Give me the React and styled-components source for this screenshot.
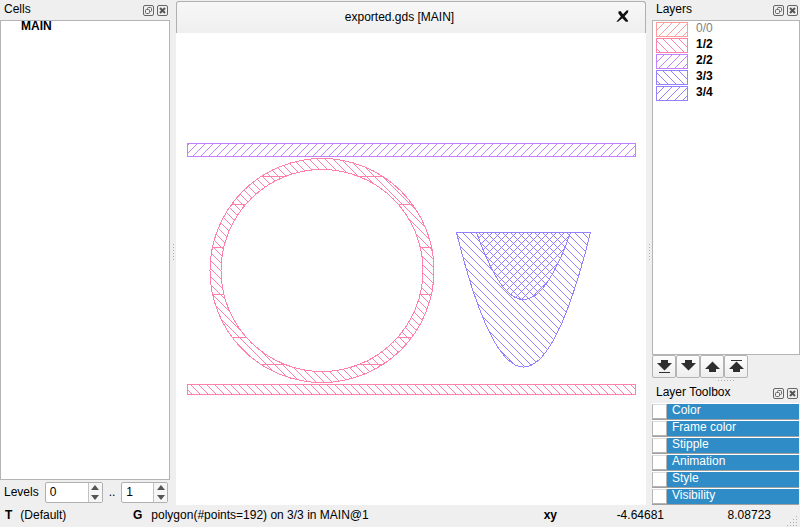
import { useState } from 'react';
import styled, { createGlobalStyle } from 'styled-components';

const PINK = '#ff80a8';
const PURPLE = '#c080ff';
const BLUE = '#9580ff';

const layers = [
  { name: '0/0', color: '#ff9d9d', hatch: 'up', empty: true },
  { name: '1/2', color: PINK, hatch: 'down' },
  { name: '2/2', color: PURPLE, hatch: 'up' },
  { name: '3/3', color: BLUE, hatch: 'down' },
  { name: '3/4', color: BLUE, hatch: 'up' },
];

const tools = ['Color', 'Frame color', 'Stipple', 'Animation', 'Style', 'Visibility'];

// one pixel per row, repeated every 8px
const steps = [0, 1, 2, 3, 4, 5, 6, 7];
const hatchPaths = {
  down: steps.map((i) => `M${i} ${i}h1v1h-1z`).join(''),
  up: steps.map((i) => `M${7 - i} ${i}h1v1h-1z`).join(''),
};

const Hatch = ({ id, color, direction, x = 0 }) => (
  <pattern id={id} x={x} y="0" width="8" height="8" patternUnits="userSpaceOnUse">
    <path d={hatchPaths[direction]} fill={color} shapeRendering="crispEdges" />
  </pattern>
);

const Swatch = ({ layer }) => {
  const id = `swatch-${layer.name.replace('/', '-')}`;
  return (
    <SwatchSvg viewBox="0 0 32 15" shapeRendering="crispEdges" aria-hidden="true">
      <defs>
        <Hatch id={id} color={layer.color} direction={layer.hatch} x={layer.hatch === 'up' ? 1 : 6} />
      </defs>
      <rect x="0.5" y="0.5" width="31" height="14" fill={`url(#${id})`} stroke={layer.color} />
    </SwatchSvg>
  );
};

const CX = 322;
const CY = 270.5;
const OUTER = 112;
const INNER = 101;
const cuts = [176.5, 204.5, 247.5, 294.5, 337.5, 364.5];

const circle = (r) => `M${CX - r} ${CY}a${r} ${r} 0 1 0 ${2 * r} 0a${r} ${r} 0 1 0 ${-2 * r} 0z`;

const cutPath = cuts
  .map((y) => {
    const dy = y - CY;
    const o = Math.sqrt(OUTER * OUTER - dy * dy);
    const i = Math.sqrt(INNER * INNER - dy * dy);
    return `M${CX - o} ${y}H${CX - i}M${CX + i} ${y}H${CX + o}`;
  })
  .join('');

const Drawing = () => (
  <DrawingSvg viewBox="176 33 470 472" shapeRendering="crispEdges" role="img" aria-label="Layout of MAIN">
    <defs>
      <Hatch id="h12" color={PINK} direction="down" x={6} />
      <Hatch id="h22" color={PURPLE} direction="up" x={5} />
      <Hatch id="h33" color={BLUE} direction="down" x={6} />
      <Hatch id="h34" color={BLUE} direction="up" x={5} />
    </defs>
    <rect x="187.5" y="143.5" width="448" height="13" fill="url(#h22)" stroke={PURPLE} />
    <rect x="187.5" y="384.5" width="448" height="10" fill="url(#h12)" stroke={PINK} />
    <path d={circle(OUTER) + circle(INNER)} fill="url(#h12)" fillRule="evenodd" stroke={PINK} />
    <path d={cutPath} stroke={PINK} />
    <path d="M456.5 232.5Q523.5 501.5 590.5 232.5z" fill="url(#h33)" stroke={BLUE} />
    <path d="M476.5 232.5Q523.5 366.5 570.5 232.5z" fill="url(#h34)" stroke={BLUE} />
  </DrawingSvg>
);

const PanelHeader = ({ title }) => (
  <Header>
    <Title>{title}</Title>
    <IconButton aria-label={`Float ${title}`}>
      <svg width="11" height="11" viewBox="0 0 11 11" fill="none" stroke="#666">
        <rect x="0.5" y="0.5" width="10" height="10" rx="1.5" />
        <rect x="4.5" y="2.5" width="4" height="4" rx="1" />
        <rect x="2.5" y="4.5" width="4" height="4" rx="1" fill="#efefef" />
      </svg>
    </IconButton>
    <IconButton aria-label={`Close ${title}`}>
      <svg width="11" height="11" viewBox="0 0 11 11" fill="none" stroke="#666">
        <rect x="0.5" y="0.5" width="10" height="10" rx="1.5" />
        <path d="M3 3l5 5M8 3l-5 5" stroke="#555" strokeWidth="2" />
      </svg>
    </IconButton>
  </Header>
);

const Spin = ({ label, initial, width }) => {
  const [value, setValue] = useState(initial);
  return (
    <SpinBox $width={width}>
      <SpinInput aria-label={label} value={value} onChange={(e) => setValue(Number(e.target.value) || 0)} />
      <SpinArrows>
        <ArrowButton aria-label={`${label} up`} onClick={() => setValue(value + 1)}>
          <svg width="8" height="5" viewBox="0 0 8 5"><path d="M0 5L4 0 8 5z" fill="#555" /></svg>
        </ArrowButton>
        <ArrowButton aria-label={`${label} down`} onClick={() => setValue(Math.max(0, value - 1))}>
          <svg width="8" height="5" viewBox="0 0 8 5"><path d="M0 0h8L4 5z" fill="#555" /></svg>
        </ArrowButton>
      </SpinArrows>
    </SpinBox>
  );
};

const moves = [
  { label: 'Move to bottom', d: 'M4 0h7v3h4L7.5 10.500 0 3h4zM2 12h11v1H2z' },
  { label: 'Move down', d: 'M4 0h7v3h4L7.5 10.500 0 3h4z' },
  { label: 'Move up', d: 'M4 12h7V9h4L7.5 1.500 0 9h4z' },
  { label: 'Move to top', d: 'M4 12h7V9h4L7.5 1.500 0 9h4zM2 0h11v1H2z' },
];

const App = () => {
  return (
    <Window>
      <GlobalStyle />
      <Body>
        <Dock $width={170}>
          <PanelHeader title="Cells" />
          <ListBox>
            <CellItem>MAIN</CellItem>
          </ListBox>
          <Levels>
            <LevelsText>Levels</LevelsText>
            <Spin label="From level" initial={0} width={58} />
            <LevelsText>..</LevelsText>
            <Spin label="To level" initial={1} width={47} />
          </Levels>
        </Dock>
        <Splitter><Grip /></Splitter>
        <Main>
          <Tab>
            <TabTitle>exported.gds [MAIN]</TabTitle>
            <IconButton aria-label="Close tab">
              <svg width="13" height="13" viewBox="0 0 13 13" fill="#111">
                <path d="M2.500 1.500L4.500 1 7 4.200 10.500 0.500 12.300 0.300 12 2.500 8.600 6.300 12 10.500 11.600 12 9.500 11.600 6.300 8.300 2 11.800 0.400 11.800 4.800 6.600 2.300 3.200z" />
              </svg>
            </IconButton>
          </Tab>
          <Drawing />
        </Main>
        <Splitter><Grip /></Splitter>
        <Dock $width={148}>
          <PanelHeader title="Layers" />
          <ListBox>
            {layers.map((layer) => (
              <LayerItem key={layer.name} $empty={layer.empty}>
                <Swatch layer={layer} />
                {layer.name}
              </LayerItem>
            ))}
          </ListBox>
          <Moves>
            {moves.map((move) => (
              <MoveButton key={move.label} aria-label={move.label}>
                <svg width="15" height="13" viewBox="0 0 15 13"><path d={move.d} fill="#2e2e2e" /></svg>
              </MoveButton>
            ))}
          </Moves>
          <HandleRow><Grip $row /></HandleRow>
          <PanelHeader title="Layer Toolbox" />
          <Toolbox>
            {tools.map((tool) => (
              <ToolRow key={tool}>
                <ToolCheck type="checkbox" />
                <ToolName>{tool}</ToolName>
              </ToolRow>
            ))}
          </Toolbox>
        </Dock>
      </Body>
      <StatusBar>
        <Mode>
          <b>T</b>
          <span>(Default)</span>
        </Mode>
        <Message>
          <b>G</b>
          <span>polygon(#points=192) on 3/3 in MAIN@1</span>
        </Message>
        <b>xy</b>
        <Coord>-4.64681</Coord>
        <Coord>8.08723</Coord>
        <SizeGrip width="12" height="12" viewBox="0 0 12 12" fill="#b0b0b0" aria-hidden="true">
          <path d="M10 1h1v1h-1zM10 4h1v1h-1zM7 4h1v1h-1zM10 7h1v1h-1zM7 7h1v1h-1zM4 7h1v1h-1zM10 10h1v1h-1zM7 10h1v1h-1zM4 10h1v1h-1zM1 10h1v1h-1z" />
        </SizeGrip>
      </StatusBar>
    </Window>
  );
};

const GlobalStyle = createGlobalStyle`
  * {
    box-sizing: border-box;
  }
  body {
    margin: 0;
    background: #efefef;
    color: #000;
    font: 12px/16px "Liberation Sans", Arial, sans-serif;
  }
  button, input {
    font: inherit;
    color: inherit;
    margin: 0;
    padding: 0;
  }
  svg {
    display: block;
  }
`;

const Window = styled.div`
  display: flex;
  flex-direction: column;
  min-height: 100vh;
`;

const Body = styled.div`
  flex: 1;
  display: flex;
`;

const Dock = styled.div`
  display: flex;
  flex-direction: column;
  flex: none;
  width: ${(p) => p.$width}px;
`;

const Header = styled.div`
  display: flex;
  align-items: flex-end;
  gap: 3px;
  height: 20px;
  padding: 0 2px 4px 4px;
`;

const Title = styled.span`
  flex: 1;
  line-height: 14px;
`;

const IconButton = styled.button`
  border: 0;
  background: none;
`;

const ListBox = styled.ul`
  flex: 1;
  margin: 0;
  padding: 0;
  list-style: none;
  background: #fff;
  border: 1px solid #b4b4b4;
`;

const CellItem = styled.li`
  padding-left: 20px;
  font-weight: bold;
  line-height: 10px;
`;

const LayerItem = styled.li`
  display: flex;
  gap: 8px;
  height: 16px;
  padding-left: 3px;
  line-height: 14px;
  font-weight: ${(p) => (p.$empty ? 'normal' : 'bold')};
  color: ${(p) => (p.$empty ? '#808080' : '#000')};
`;

const SwatchSvg = styled.svg`
  width: 32px;
  height: 15px;
  margin-top: 1px;
`;

const Levels = styled.div`
  display: flex;
  align-items: center;
  height: 25px;
  padding: 0 1px 0 4px;
  gap: 6px;
`;

const LevelsText = styled.span`
  padding-bottom: 2px;
`;

const SpinBox = styled.div`
  display: flex;
  width: ${(p) => p.$width}px;
  height: 21px;
  background: #fff;
  border: 1px solid #b0b0b0;
  border-radius: 2px;
`;

const SpinInput = styled.input`
  flex: 1;
  min-width: 0;
  padding: 0 4px 2px;
  border: 0;
  background: none;
  outline: none;
`;

const SpinArrows = styled.div`
  display: flex;
  flex-direction: column;
  width: 14px;
  background: #f6f6f6;
  border-left: 1px solid #c4c4c4;
`;

const ArrowButton = styled.button`
  flex: 1;
  display: flex;
  align-items: center;
  justify-content: center;
  border: 0;
  background: none;
`;

const Splitter = styled.div`
  display: flex;
  align-items: center;
  justify-content: center;
  flex: none;
  width: 6px;
`;

const Grip = styled.div`
  width: ${(p) => (p.$row ? 17 : 1)}px;
  height: ${(p) => (p.$row ? 1 : 17)}px;
  background: repeating-linear-gradient(${(p) => (p.$row ? 'to right' : 'to bottom')}, #b0b0b0 0 1px, transparent 1px 3px);
`;

const Main = styled.div`
  flex: 1;
  display: flex;
  flex-direction: column;
  min-width: 0;
  padding-top: 1px;
`;

const Tab = styled.div`
  display: flex;
  align-items: center;
  height: 32px;
  padding: 0 16px 2px 0;
  background: linear-gradient(#f7f7f7, #efefef);
  border: solid #b0b0b0;
  border-width: 1px 1px 0;
  border-radius: 3px 3px 0 0;
`;

const TabTitle = styled.span`
  flex: 1;
  padding-left: 6px;
  text-align: center;
`;

const DrawingSvg = styled.svg`
  flex: 1;
  width: 100%;
  min-height: 0;
  background: #fff;
`;

const Moves = styled.div`
  display: flex;
`;

const MoveButton = styled.button`
  display: flex;
  align-items: center;
  justify-content: center;
  width: 24px;
  height: 23px;
  background: linear-gradient(#fdfdfd, #eee);
  border: 1px solid #b4b4b4;
  border-radius: 2px;
`;

const HandleRow = styled.div`
  display: flex;
  align-items: center;
  justify-content: center;
  height: 5px;
`;

const Toolbox = styled.div`
  padding-right: 1px;
`;

const ToolRow = styled.label`
  display: flex;
  height: 17px;
  border-top: 1px solid #fff;
  border-bottom: 1px solid #a0a0a0;
  background: #308cc6;
`;

const ToolCheck = styled.input`
  appearance: none;
  width: 15px;
  height: 15px;
  background: #fff;
  border: 1px solid #b4b4b4;
  border-top-color: #ddd;

  &:checked {
    background: #308cc6;
  }
`;

const ToolName = styled.span`
  padding-left: 5px;
  line-height: 13px;
  color: #fff;
`;

const StatusBar = styled.footer`
  display: flex;
  height: 22px;
  padding: 0 2px 0 5px;
  line-height: 20px;
`;

const Mode = styled.div`
  display: flex;
  gap: 8px;
  width: 128px;
`;

const Message = styled.div`
  flex: 1;
  display: flex;
  gap: 9px;
`;

const Coord = styled.span`
  width: 107px;
  text-align: right;
`;

const SizeGrip = styled.svg`
  align-self: flex-end;
  margin-left: 15px;
`;

export default App;
